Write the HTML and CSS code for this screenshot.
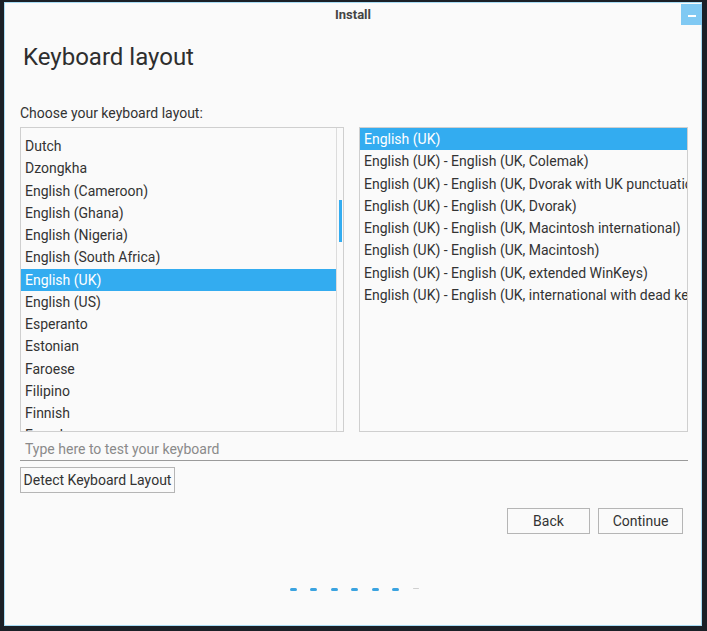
FILE: index.html
```html
<!DOCTYPE html>
<html>
<head>
<meta charset="utf-8">
<link rel="stylesheet" href="styles.css">
</head>
<body>
<div class="window">
  <div class="titlebar">
    <span class="title">Install</span>
    <span class="minimize"><span class="dash"></span></span>
  </div>
  <div class="content">
    <h1 class="heading">Keyboard layout</h1>
    <div class="label">Choose your keyboard layout:</div>
    <div class="lists">
      <div class="list left">
        <div class="rows">
          <div class="row">Dutch</div>
          <div class="row">Dzongkha</div>
          <div class="row">English (Cameroon)</div>
          <div class="row">English (Ghana)</div>
          <div class="row">English (Nigeria)</div>
          <div class="row">English (South Africa)</div>
          <div class="row selected">English (UK)</div>
          <div class="row">English (US)</div>
          <div class="row">Esperanto</div>
          <div class="row">Estonian</div>
          <div class="row">Faroese</div>
          <div class="row">Filipino</div>
          <div class="row">Finnish</div>
          <div class="row">French</div>
        </div>
        <div class="scrollbar"><div class="thumb"></div></div>
      </div>
      <div class="list right">
        <div class="rows">
          <div class="row selected">English (UK)</div>
          <div class="row">English (UK) - English (UK, Colemak)</div>
          <div class="row">English (UK) - English (UK, Dvorak with UK punctuation)</div>
          <div class="row">English (UK) - English (UK, Dvorak)</div>
          <div class="row">English (UK) - English (UK, Macintosh international)</div>
          <div class="row">English (UK) - English (UK, Macintosh)</div>
          <div class="row">English (UK) - English (UK, extended WinKeys)</div>
          <div class="row">English (UK) - English (UK, international with dead keys)</div>
        </div>
      </div>
    </div>
    <div class="testinput">Type here to test your keyboard</div>
    <div class="detect-row"><span class="button detect">Detect Keyboard Layout</span></div>
    <div class="nav">
      <span class="button nav-btn back">Back</span>
      <span class="button nav-btn">Continue</span>
    </div>
    <div class="progress">
      <span class="dot"></span><span class="dot"></span><span class="dot"></span><span class="dot"></span><span class="dot"></span><span class="dot"></span><span class="dot off"></span>
    </div>
  </div>
</div>
</body>
</html>
```
FILE: styles.css
```css
html, body {
  margin: 0;
  padding: 0;
  background: #1b2027;
  width: 707px;
  height: 631px;
  overflow: hidden;
}
body {
  font-family: Roboto, "Noto Sans", sans-serif;
  color: #333;
}
.window {
  position: relative;
  box-sizing: border-box;
  width: 698px;
  height: 624px;
  margin: 2px 0 0 4px;
  background: #fafafa;
  border: 1px solid #a8dcf4;
}
.titlebar {
  height: 22px;
  display: flex;
  justify-content: center;
  align-items: center;
}
.title {
  font-size: 13px;
  font-weight: bold;
  color: #444;
}
.minimize {
  position: absolute;
  top: 1px;
  right: -1px;
  width: 21px;
  height: 21px;
  background: #80c9f3;
  display: flex;
  align-items: center;
  justify-content: center;
}
.dash {
  width: 8px;
  height: 2px;
  background: #fff;
  margin-top: 2px;
}
.content {
  padding: 0 13px 0 15px;
}
.heading {
  margin: 18px 0 0 3px;
  font-size: 24px;
  font-weight: normal;
  line-height: 28px;
  color: #2e2e2e;
}
.label {
  margin-top: 32px;
  font-size: 14px;
  line-height: 20px;
  color: #333;
}
.lists {
  margin-top: 4px;
  display: flex;
  gap: 15px;
  height: 305px;
}
.list {
  box-sizing: border-box;
  border: 1px solid #cfcfcf;
  background: #fafafa;
  overflow: hidden;
  position: relative;
  font-size: 14px;
}
.list.left {
  width: 324px;
  display: flex;
}
.list.left .rows {
  flex: 1;
  padding-top: 7px;
  border-right: 1px solid #dcdcdc;
}
.list.right {
  width: 329px;
}
.rows {
  overflow: hidden;
}
.row {
  height: 22.25px;
  line-height: 22px;
  padding-left: 4px;
  white-space: nowrap;
  overflow: hidden;
}
.row.selected {
  background: #33acf0;
  color: #fff;
}
.scrollbar {
  width: 6px;
  position: relative;
}
.thumb {
  position: absolute;
  left: 2px;
  top: 72px;
  width: 3px;
  height: 42px;
  background: #33acf0;
}
.testinput {
  margin-top: 6px;
  height: 23px;
  box-sizing: border-box;
  border-bottom: 1px solid #9a9a9a;
  width: 668px;
  padding-left: 5px;
  font-size: 14px;
  line-height: 22px;
  color: #8a8a8a;
}
.detect-row {
  margin-top: 6px;
  display: flex;
}
.button {
  box-sizing: border-box;
  border: 1px solid #b5b5b5;
  background: #fafafa;
  font-size: 14px;
  color: #333;
  height: 26px;
  line-height: 24px;
  display: inline-flex;
  align-items: center;
  justify-content: center;
}
.detect {
  width: 155px;
}
.nav {
  margin-top: 15px;
  display: flex;
  justify-content: flex-end;
  gap: 8px;
  padding-right: 5px;
}
.nav-btn {
  width: 85px;
}
.nav-btn.back {
  width: 83px;
}
.progress {
  margin-top: 54px;
  display: flex;
  justify-content: center;
  gap: 13.5px;
}
.dot {
  width: 7px;
  height: 3px;
  border-radius: 1.5px;
  background: #3aa3e0;
}
.dot.off {
  width: 6px;
  height: 1px;
  background: #cfcfcf;
}
```
